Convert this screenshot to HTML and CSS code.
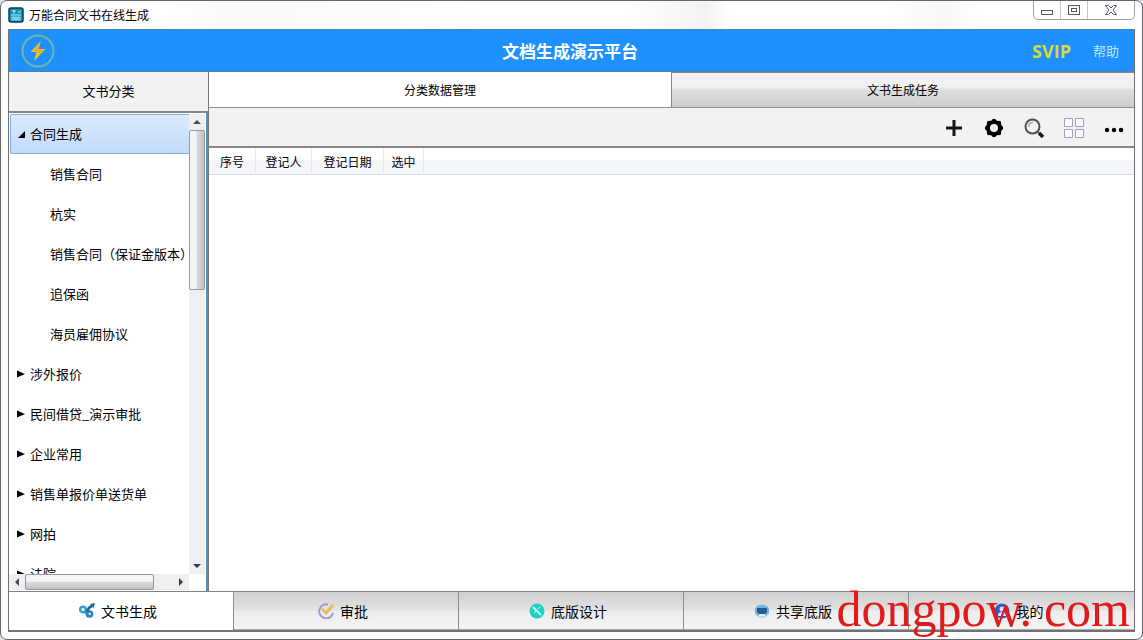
FILE: index.html
```html
<!DOCTYPE html>
<html lang="zh-CN">
<head>
<meta charset="utf-8">
<title>万能合同文书在线生成</title>
<link rel="stylesheet" href="styles.css">
</head>
<body>
<div class="window">
  <header class="titlebar">
    <svg class="app-icon" width="16" height="16" viewBox="0 0 16 16"><rect x="1" y="1" width="14" height="14" rx="2" fill="#1592b4" stroke="#0b3c58" stroke-width="1.5"/><path d="M4 4h4M6 3v4M10 5h3M3 8h10" stroke="#a8ecf5"/><path d="M4 10h2v3H4zM7 10h2v3H7zM10 10h2v3h-2z" fill="none" stroke="#a8ecf5"/></svg>
    <span class="caption">万能合同文书在线生成</span>
    <div class="window-buttons">
      <button class="win-btn" aria-label="最小化"><svg width="14" height="14" viewBox="0 0 14 14"><rect x="1.500" y="7.500" width="11" height="4" fill="#fff" stroke="#555a66"/></svg></button>
      <button class="win-btn" aria-label="最大化"><svg width="14" height="14" viewBox="0 0 14 14"><rect x="1.500" y="2.500" width="11" height="9" fill="#fff" stroke="#555a66"/><rect x="4.500" y="5.500" width="5" height="3" fill="#fff" stroke="#555a66"/></svg></button>
      <button class="win-btn win-close" aria-label="关闭"><svg width="14" height="14" viewBox="0 0 14 14"><path d="M1.500 2.500h3L7 5l2.500-2.500h3L9 7l3.500 4.500h-3L7 9l-2.500 2.500h-3L5 7z" fill="#fff" stroke="#555a66"/></svg></button>
    </div>
  </header>
  <div class="app">
    <div class="banner">
      <svg class="logo" width="34" height="34" viewBox="0 0 34 34"><circle cx="17" cy="17" r="15.500" fill="none" stroke="#6fb5a4" stroke-width="2"/><path d="M20 7 9.500 18h6L13 27l11.500-12h-7z" fill="#e8c42c"/><path d="m18 11-5 6h5l-1 4 4-5h-5z" fill="#ff9c22"/></svg>
      <h1 class="banner-title">文档生成演示平台</h1>
      <div class="banner-links"><a class="svip" href="#svip">SVIP</a><a class="help" href="#help">帮助</a></div>
    </div>
    <div class="workspace">
      <aside class="sidebar">
        <h2 class="sidebar-title">文书分类</h2>
        <div class="tree-area">
          <ul class="tree">
            <li class="node selected"><svg class="arrow" width="8" height="8"><path d="M8 1v7H1z"/></svg>合同生成</li>
            <li class="node child">销售合同</li>
            <li class="node child">杭实</li>
            <li class="node child">销售合同（保证金版本）</li>
            <li class="node child">追保函</li>
            <li class="node child">海员雇佣协议</li>
            <li class="node"><svg class="arrow" width="8" height="8"><path d="M0 .5 8 4 0 7.500z"/></svg>涉外报价</li>
            <li class="node"><svg class="arrow" width="8" height="8"><path d="M0 .5 8 4 0 7.500z"/></svg>民间借贷_演示审批</li>
            <li class="node"><svg class="arrow" width="8" height="8"><path d="M0 .5 8 4 0 7.500z"/></svg>企业常用</li>
            <li class="node"><svg class="arrow" width="8" height="8"><path d="M0 .5 8 4 0 7.500z"/></svg>销售单报价单送货单</li>
            <li class="node"><svg class="arrow" width="8" height="8"><path d="M0 .5 8 4 0 7.500z"/></svg>网拍</li>
            <li class="node"><svg class="arrow" width="8" height="8"><path d="M0 .5 8 4 0 7.500z"/></svg>法院</li>
          </ul>
          <div class="scroll-v">
            <svg width="16" height="16"><path d="M4 10l4-4 4 4z" fill="#454b5c"/></svg>
            <div class="thumb-v"></div>
            <svg width="16" height="16"><path d="M4 6h8l-4 4z" fill="#343948"/></svg>
          </div>
          <div class="scroll-h">
            <svg width="16" height="16"><path d="M10 4v8L6 8z" fill="#454b5c"/></svg>
            <div class="thumb-h"></div>
            <svg width="16" height="16"><path d="M6 4v8l4-4z" fill="#343948"/></svg>
          </div>
        </div>
      </aside>
      <main class="content">
        <div class="tabs">
          <button class="tab active">分类数据管理</button>
          <button class="tab">文书生成任务</button>
        </div>
        <div class="toolbar">
          <button class="tool" aria-label="新增"><svg width="20" height="20"><path d="M10 2v16M2 10h16" stroke="#161616" stroke-width="3"/></svg></button>
          <button class="tool" aria-label="设置"><svg width="20" height="20"><circle cx="10" cy="10" r="6" fill="none" stroke="#000" stroke-width="4"/><g fill="#000"><circle cx="10" cy="3" r="2.200"/><circle cx="15" cy="5" r="2.200"/><circle cx="17" cy="10" r="2.200"/><circle cx="15" cy="15" r="2.200"/><circle cx="10" cy="17" r="2.200"/><circle cx="5" cy="15" r="2.200"/><circle cx="3" cy="10" r="2.200"/><circle cx="5" cy="5" r="2.200"/></g></svg></button>
          <button class="tool" aria-label="查询"><svg width="20" height="20"><circle cx="8.500" cy="8.500" r="7" fill="#f2f2f2" stroke="#515151" stroke-width="2"/><path d="M4.500 9q0-4.500 4.500-4.500" fill="none" stroke="#aaa" stroke-width="1.500"/><path d="M13.500 13.500l1.500 1.500" stroke="#555" stroke-width="2"/><path d="M15 15l4 4" stroke="#1b1b1b" stroke-width="3.500"/></svg></button>
          <button class="tool" aria-label="视图"><svg width="20" height="20"><path d="M.5.5h8v8h-8zM11.500.5h8v8h-8zM.5 11.500h8v8h-8zM11.500 11.500h8v8h-8z" fill="#fafaff" stroke="#a79bcb"/></svg></button>
          <button class="tool" aria-label="更多"><svg width="20" height="20"><g fill="#000"><circle cx="3" cy="12" r="2.200"/><circle cx="10" cy="12" r="2.200"/><circle cx="17" cy="12" r="2.200"/></g></svg></button>
        </div>
        <table class="grid">
          <colgroup><col class="col-no"><col class="col-user"><col class="col-date"><col class="col-pick"><col></colgroup>
          <thead><tr><th>序号</th><th>登记人</th><th>登记日期</th><th>选中</th><th class="rest"></th></tr></thead>
        </table>
      </main>
    </div>
    <nav class="footer">
      <button class="nav-item current"><svg width="16" height="16"><g fill="none" stroke-width="2.500"><circle cx="4" cy="6.500" r="2.800" stroke="#3a9fc9"/><path d="M6 8.500l4 4.500" stroke="#2386bd"/><circle cx="10.500" cy="11" r="2.600" stroke="#2386bd"/><path d="M8.500 8.500q0-4 5-5.500" stroke="#176b9f"/></g><path d="M11 1l5-1-1.500 5z" fill="#176b9f"/></svg>文书生成</button>
      <button class="nav-item"><svg width="16" height="16"><path d="M10 1.500A7 7 0 1 0 15 10" fill="none" stroke="#9a9bd0" stroke-width="2"/><path d="M4 6l4 4 7-8" fill="none" stroke="#e5be55" stroke-width="3"/></svg>审批</button>
      <button class="nav-item"><svg width="16" height="16"><circle cx="8" cy="8" r="7.500" fill="#20cfc6"/><path d="M4 4l8 8" stroke="#b9fff7" stroke-width="2"/><path d="M9 6l2-2M5 10l2-2" stroke="#b9fff7"/></svg>底版设计</button>
      <button class="nav-item"><svg width="16" height="16"><circle cx="8" cy="8" r="7" fill="#b5d6ea"/><path d="M1 6q1-4 7-4t7 4v4q-1 3-7 3t-7-3z" fill="#78b1d6"/><path d="M3 5h10v4l-2 2H5L3 9z" fill="#1e5f90"/><path d="M5 11h6v2H5z" fill="#e3f3fb"/></svg>共享底版</button>
      <button class="nav-item"><svg width="16" height="16"><circle cx="8" cy="8" r="7.500" fill="#2c5bd0"/><circle cx="8" cy="6" r="2.500" fill="#dce5fa"/><path d="M4 13q0-4 4-4t4 4z" fill="#dce5fa"/></svg>我的</button>
    </nav>
  </div>
  <div class="watermark"><span>dongpow.</span><span>com</span></div>
</div>
</body>
</html>
```
FILE: styles.css
```css
* { box-sizing: border-box; }
body {
  margin: 0;
  background: #dfe3e8;
  color: #000;
  font: 13px/20px "Noto Sans CJK SC", sans-serif;
}
h1, h2, ul { margin: 0; padding: 0; }
svg { display: block; flex: none; }
button { border: 0; padding: 0; margin: 0; font: inherit; color: inherit; background: none; }
a { text-decoration: none; }

.window {
  position: relative;
  display: flex;
  flex-direction: column;
  height: 100vh;
  padding: 0 7px 7px;
  border: 1px solid #66666b;
  border-radius: 7px;
  background: #fdfdfd;
}
.titlebar {
  display: flex;
  align-items: center;
  gap: 5px;
  height: 28px;
  background: linear-gradient(90deg, #fff 14%, #fbf9f9 20%, #fff 42%, #fff 55%, #f4f2f3 62%, #fff 64%, #fff 78%, #f9f7f7 83%, #fff 86%);
}
.caption { font-size: 12px; }
.window-buttons {
  display: flex;
  align-self: flex-start;
  height: 19px;
  margin-left: auto;
  border: 1px solid #a0a0a4;
  border-top: 0;
  border-radius: 0 0 5px 5px;
}
.win-btn { display: grid; place-items: center; width: 27px; border-right: 1px solid #c5c5c8; }
.win-close { width: 46px; border-right: 0; }

.app { flex: 1; min-height: 0; display: flex; flex-direction: column; border: 1px solid #707278; border-top: 0; border-bottom-width: 2px; }
.banner {
  display: grid;
  grid-template-columns: 1fr auto 1fr;
  align-items: center;
  height: 43px;
  padding: 0 15px 0 12px;
  border-top: 1px solid #4585bd;
  border-bottom: 1px solid #567ea4;
  background: #1e90ff;
}
.banner-title { color: #fff; font-size: 17px; line-height: 24px; }
.banner-links { display: flex; justify-content: flex-end; align-items: center; gap: 22px; }
.svip { color: #d8d83a; font: bold 18px/24px "Open Sans", sans-serif; }
.help { color: #c3e5ff; }

.workspace { flex: 1; min-height: 0; display: flex; }
.sidebar { flex: none; width: 200px; display: flex; flex-direction: column; border-right: 1px solid #75787c; }
.sidebar-title {
  height: 41px;
  border-bottom: 2px solid #84868a;
  background: #f2f2f2;
  font-size: 13px;
  font-weight: normal;
  line-height: 38px;
  text-align: center;
}
.tree-area {
  flex: 1;
  min-height: 0;
  display: grid;
  grid-template: minmax(0, 1fr) 16px / minmax(0, 1fr) 16px;
  padding: 1px 1px 1px 0;
  border-right: 2px solid #5c8db8;
  background: #fff;
}
.tree { overflow: hidden; padding-left: 1px; list-style: none; }
.node { display: flex; align-items: center; gap: 5px; height: 40px; padding-left: 7px; white-space: nowrap; }
.child { padding-left: 40px; }
.selected { border: 1px solid #84acdd; border-right: 0; border-radius: 2px 0 0 2px; padding-left: 6px; background: linear-gradient(#dceafc, #c1dbfc); }
.scroll-v { display: flex; flex-direction: column; background: #efeff1; }
.thumb-v { height: 160px; margin-bottom: auto; border: 1px solid #989898; border-radius: 2px; background: linear-gradient(90deg, #f5f5f5 45%, #dadadc 50%, #c2c2c6); }
.scroll-h { display: flex; background: #efeff1; }
.thumb-h { width: 129px; margin-right: auto; border: 1px solid #989898; border-radius: 2px; background: linear-gradient(#f5f5f5 45%, #dadadc 50%, #c2c2c6); }

.content { flex: 1; min-width: 0; display: flex; flex-direction: column; background: #fff; }
.tabs { display: flex; height: 36px; border-bottom: 1px solid #8c8e92; }
.tab { flex: 1; font-size: 12px; border-left: 1px solid #85878c; border-top: 1px solid #85878c; background: linear-gradient(#f2f2f2 40%, #dedede 50%, #cdcdcd); }
.active { border: 0; background: #fff; }
.toolbar { display: flex; justify-content: flex-end; align-items: center; gap: 20px; height: 40px; padding: 2px 10px 0 0; border-bottom: 2px solid #85878a; background: #f2f2f3; }
.grid { width: 100%; table-layout: fixed; border-collapse: separate; border-spacing: 0; font-size: 12px; }
.col-no { width: 47px; }
.col-user { width: 56px; }
.col-date { width: 72px; }
.col-pick { width: 40px; }
.grid th { height: 27px; padding: 1px 0 0; font-weight: normal; border-right: 1px solid #e3e9f1; border-bottom: 1px solid #d5dbe5; background: linear-gradient(#fff 45%, #f5f6fb 50%); }
.grid .rest { border-right: 0; }

.footer { display: grid; grid-template-columns: repeat(5, 1fr); height: 39px; border-top: 1px solid #808286; background: #fff; }
.nav-item { display: flex; justify-content: center; align-items: center; gap: 6px; padding-right: 6px; font-size: 14px; border-right: 1px solid #8b8d91; border-bottom: 1px solid #aaa; background: linear-gradient(#cfcfcf, #e2e2e2 48%, #ededed 52%, #f3f3f3); }
.nav-item:last-child { border-right: 0; }
.current { background: #fff; border-bottom: 0; }

.watermark {
  position: absolute;
  right: 12px;
  bottom: 1px;
  display: flex;
  gap: 12px;
  color: #e01b1b;
  font: 50px/58px "Liberation Serif", serif;
  pointer-events: none;
}
```
